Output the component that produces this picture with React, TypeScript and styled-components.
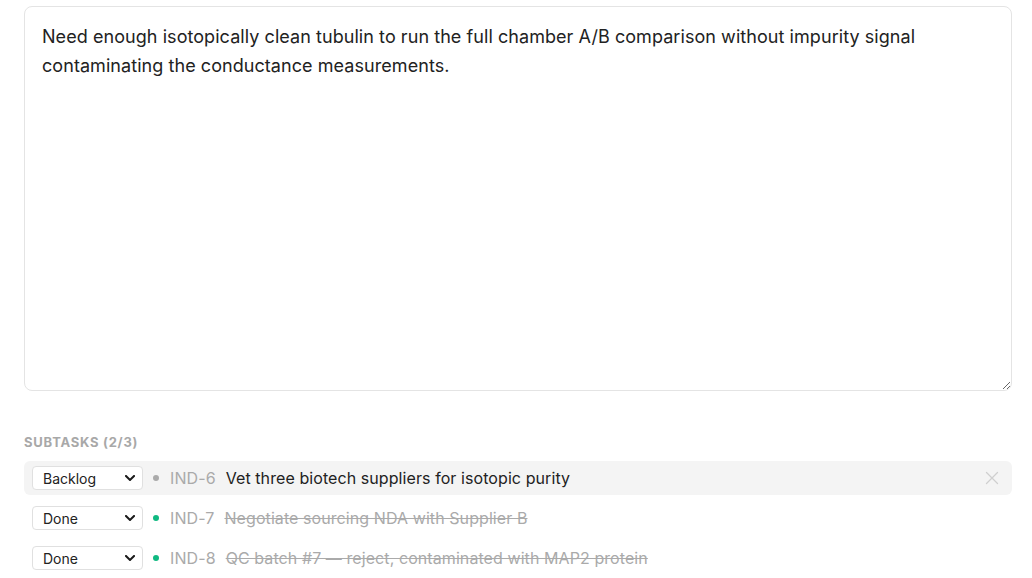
import React from "react";
import styled, { createGlobalStyle } from "styled-components";

const Global = createGlobalStyle`
  html, body { margin: 0; padding: 0; background: #fff; }
  body { font-family: Inter, "Noto Sans", sans-serif; color: #222; }
  * { box-sizing: border-box; }
`;

const Page = styled.div`
  padding: 6px 20px 0 24px;
  display: flex;
  flex-direction: column;
`;

const Description = styled.textarea`
  width: 100%;
  height: 385px;
  border: 1px solid #e4e4e4;
  border-radius: 8px;
  padding: 15px 17px;
  font-family: Inter, "Noto Sans", sans-serif;
  font-size: 18px;
  letter-spacing: 0.06px;
  line-height: 29px;
  color: #222;
  resize: vertical;
  outline: none;
  display: block;
`;

const Heading = styled.div`
  margin-top: 43px;
  font-size: 13px;
  font-weight: 700;
  letter-spacing: 0.75px;
  color: #a8a8a8;
  text-transform: uppercase;
  line-height: 17px;
`;

const List = styled.div`
  margin-top: 10px;
  display: flex;
  flex-direction: column;
  gap: 6px;
`;

const Row = styled.div<{ $active?: boolean }>`
  display: flex;
  align-items: center;
  height: 34px;
  padding: 0 8px;
  border-radius: 6px;
  background: ${(p) => (p.$active ? "#f4f4f4" : "transparent")};
`;

const SelectWrap = styled.div`
  position: relative;
  width: 111px;
  height: 24px;
  flex-shrink: 0;
  display: flex;
`;

const StatusSelect = styled.select`
  appearance: none;
  -webkit-appearance: none;
  width: 100%;
  height: 100%;
  border: 1px solid #e0e0e0;
  border-radius: 4px;
  background: #fff;
  font-family: Inter, "Noto Sans", sans-serif;
  font-size: 14px;
  color: #222;
  padding: 0 24px 0 10px;
  outline: none;
`;

const Chevron = styled.svg`
  position: absolute;
  left: 93px;
  top: 9px;
  pointer-events: none;
  color: #1a1a1a;
`;

const Dot = styled.span<{ $color: string }>`
  width: 6px;
  height: 6px;
  border-radius: 50%;
  background: ${(p) => p.$color};
  margin-left: 10px;
  flex-shrink: 0;
`;

const Key = styled.span`
  margin-left: 11px;
  font-size: 16px;
  letter-spacing: 0.1px;
  color: #aaa;
`;

const Title = styled.span<{ $done?: boolean }>`
  margin-left: 10px;
  font-size: 16px;
  letter-spacing: 0.08px;
  color: ${(p) => (p.$done ? "#aaa" : "#222")};
  text-decoration: ${(p) => (p.$done ? "line-through" : "none")};
  flex: 1;
`;

const Remove = styled.button`
  border: none;
  background: none;
  padding: 0;
  margin-right: 5px;
  display: flex;
  color: #cfcfcf;
  cursor: pointer;
`;

const subtasks = [
  { key: "IND-6", status: "Backlog", title: "Vet three biotech suppliers for isotopic purity", done: false },
  { key: "IND-7", status: "Done", title: "Negotiate sourcing NDA with Supplier B", done: true },
  { key: "IND-8", status: "Done", title: "QC batch #7 — reject, contaminated with MAP2 protein", done: true },
];

export default function App() {
  return (
    <>
      <Global />
      <Page>
        <Description
          defaultValue="Need enough isotopically clean tubulin to run the full chamber A/B comparison without impurity signal contaminating the conductance measurements."
        />
        <Heading>Subtasks (2/3)</Heading>
        <List>
          {subtasks.map((s, i) => (
            <Row key={s.key} $active={i === 0}>
              <SelectWrap>
                <StatusSelect defaultValue={s.status}>
                  <option>Backlog</option>
                  <option>Todo</option>
                  <option>In Progress</option>
                  <option>Done</option>
                </StatusSelect>
                <Chevron width="10" height="6" viewBox="0 0 10 6" fill="none" stroke="currentColor" strokeWidth="2" strokeLinecap="square">
                  <path d="M1 1L5 5L9 1" />
                </Chevron>
              </SelectWrap>
              <Dot $color={s.done ? "#10b981" : "#aaa"} />
              <Key>{s.key}</Key>
              <Title $done={s.done}>{s.title}</Title>
              {i === 0 && (
                <Remove aria-label="Remove">
                  <svg width="14" height="14" viewBox="0 0 14 14" fill="none" stroke="currentColor" strokeWidth="1.3" strokeLinecap="round">
                    <path d="M1.5 1.5L12.5 12.5M12.5 1.5L1.5 12.5" />
                  </svg>
                </Remove>
              )}
            </Row>
          ))}
        </List>
      </Page>
    </>
  );
}
